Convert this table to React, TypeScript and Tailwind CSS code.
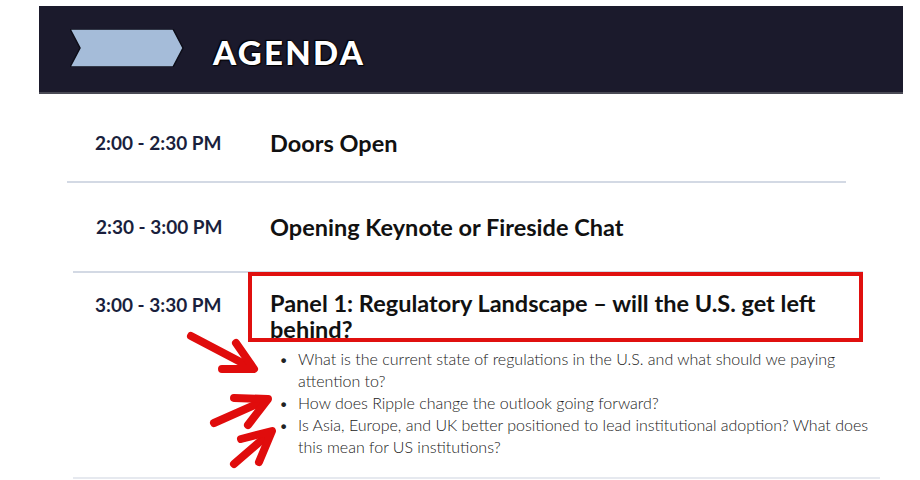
export default function App() {
  return (
    <div
      className="relative w-[920px] h-[480px] overflow-hidden bg-white"
      style={{ fontFamily: "Lato, 'Liberation Sans', sans-serif" }}
    >
      {/* Header band */}
      <div className="ml-[39px] mt-[6px] w-[864px] h-[88px] bg-[#1b1a2c] flex items-center border-b-2 border-[#4a4a55]">
        <svg width="114" height="38" viewBox="0 0 114 38" className="ml-[31px] -mt-[2px]">
          <polygon points="0,0 103,0 113,19 103,38 0,38 10,19" fill="#a5bcd9" stroke="#0d0d18" strokeWidth="1.5" />
        </svg>
        <div
          className="ml-[29px] mt-[6px] text-[33px] leading-none font-black tracking-[0.07em] text-white"
          style={{ textShadow: "0 0 2px #000, 1px 1px 1px #000, -1px -1px 1px #000" }}
        >
          AGENDA
        </div>
      </div>

      {/* Row 1 */}
      <div className="flex items-center pt-[38px] pb-[27px]">
        <div className="w-[270px] pl-[95px] text-[19px] leading-[22px] font-bold text-[#1a1f3d]">2:00 - 2:30 PM</div>
        <div className="text-[23.5px] leading-[22px] font-bold text-[#111]">Doors Open</div>
      </div>
      <div className="ml-[67px] w-[779px] h-[2px] bg-[#d3d9e4]" />

      {/* Row 2 */}
      <div className="flex items-center pt-[33px] pb-[33px]">
        <div className="w-[270px] pl-[96px] text-[19px] leading-[22px] font-bold text-[#1a1f3d]">2:30 - 3:00 PM</div>
        <div className="text-[23.5px] leading-[22px] font-bold text-[#111]">Opening Keynote or Fireside Chat</div>
      </div>
      <div className="ml-[73px] w-[790px] h-[2px] bg-[#d3d9e4]" />

      {/* Row 3 */}
      <div className="flex pt-[17px]">
        <div className="w-[270px] pl-[95px] pt-[2px] text-[19px] leading-[26px] font-bold text-[#1a1f3d]">3:00 - 3:30 PM</div>
        <div className="flex flex-col">
          <div className="w-[585px] text-[23.5px] leading-[26px] font-bold text-[#111]">
            Panel 1: Regulatory Landscape – will the U.S. get left behind?
          </div>
          <ul className="mt-[6px] -ml-[2px] w-[612px] text-[16px] leading-[22px] font-light text-[#222]">
            <li className="flex">
              <span className="w-[16px] shrink-0 pl-[11px]">•</span>
              <span className="pl-[14px]">What is the current state of regulations in the U.S. and what should we paying attention to?</span>
            </li>
            <li className="flex">
              <span className="w-[16px] shrink-0 pl-[11px]">•</span>
              <span className="pl-[14px]">How does Ripple change the outlook going forward?</span>
            </li>
            <li className="flex">
              <span className="w-[16px] shrink-0 pl-[11px]">•</span>
              <span className="pl-[14px]">Is Asia, Europe, and UK better positioned to lead institutional adoption? What does this mean for US institutions?</span>
            </li>
          </ul>
        </div>
      </div>
      <div className="absolute left-[73px] top-[477px] w-[807px] h-[2px] bg-[#e6e9ef]" />

      {/* Red highlight box */}
      <div className="absolute left-[248px] top-[272px] w-[615px] h-[70px] border-[4px] border-[#e0100f]" />

      {/* Red arrows */}
      <svg className="absolute left-0 top-0" width="920" height="480" viewBox="0 0 920 480">
        <g stroke="#e00c0c" strokeWidth="8" strokeLinecap="round" strokeLinejoin="round" fill="none">
          <line x1="191" y1="336" x2="252" y2="368" />
          <polyline points="236,343 254,369 222,369" />
          <line x1="214" y1="423" x2="266" y2="400" />
          <polyline points="234,398 268,399 248,425" />
          <line x1="234" y1="464" x2="270" y2="433" />
          <polyline points="241,439 272,431 259,462" />
        </g>
      </svg>
    </div>
  );
}
